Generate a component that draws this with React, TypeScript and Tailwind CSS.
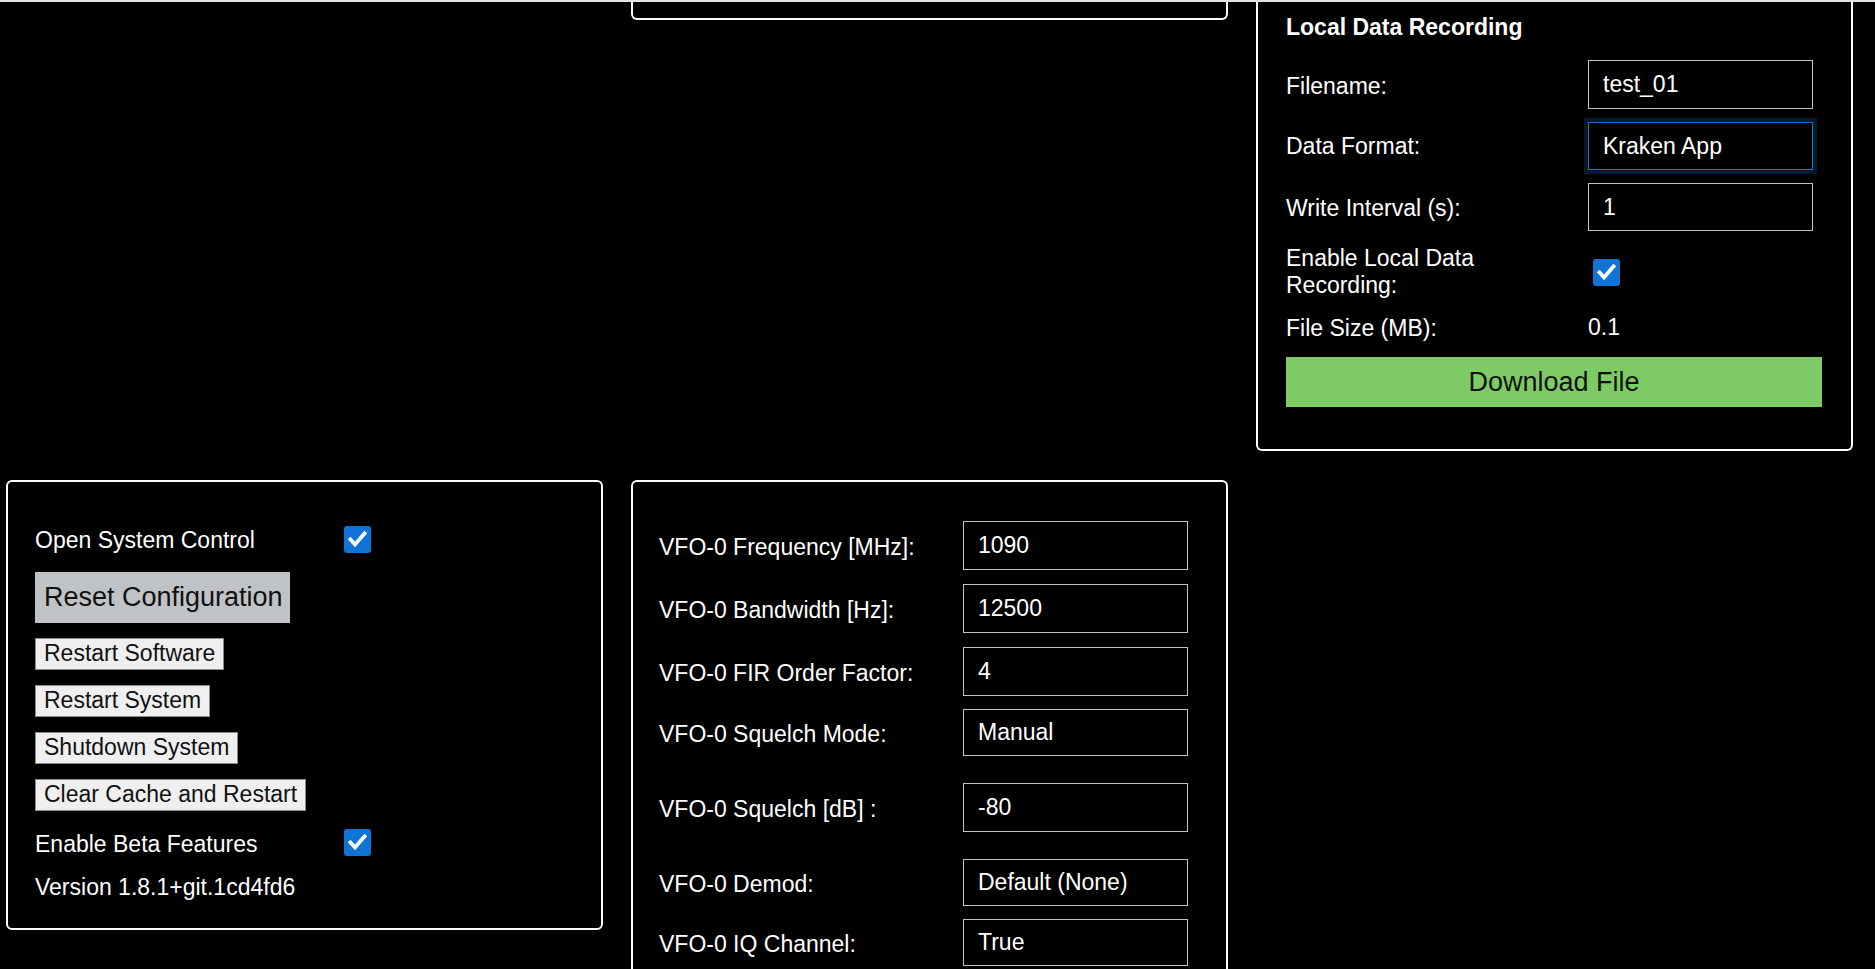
import React from "react";

const FONT = { fontFamily: '"Liberation Sans", Arial, Helvetica, sans-serif' };

function Check() {
  return (
    <div className="w-[27px] h-[27px] rounded-[3px] bg-[#0f74d6] shrink-0">
      <svg width="27" height="27" viewBox="0 0 27 27">
        <path d="M6.5 13.5 L11 18.5 L20.5 7.5" fill="none" stroke="white" strokeWidth="3.8" strokeLinecap="square" strokeLinejoin="miter" />
      </svg>
    </div>
  );
}

function Field({ value, focused = false, h = 48 }: { value: string; focused?: boolean; h?: number }) {
  return (
    <div
      className={
        focused
          ? "w-[225px] border-[1.5px] border-[#1c6fd3] shadow-[0_0_0_4px_#0a1828] bg-black text-white text-[23px] pl-[14px] flex items-center"
          : "w-[225px] border-[1.5px] border-[#c4c4c4] bg-black text-white text-[23px] pl-[14px] flex items-center"
      }
      style={{ height: h }}
    >
      {value}
    </div>
  );
}

function SmallButton({ label, mt }: { label: string; mt: string }) {
  return (
    <div className={mt}>
      <button className="h-[32px] px-[8px] border border-[#8a8a8a] bg-[#efefef] text-[#111] text-[23px] leading-none">
        {label}
      </button>
    </div>
  );
}

export default function App() {
  const vfoRows: { label: string; value: string; mt: string; h: number }[] = [
    { label: "VFO-0 Frequency [MHz]:", value: "1090", mt: "mt-[39px]", h: 49 },
    { label: "VFO-0 Bandwidth [Hz]:", value: "12500", mt: "mt-[14px]", h: 49 },
    { label: "VFO-0 FIR Order Factor:", value: "4", mt: "mt-[14px]", h: 49 },
    { label: "VFO-0 Squelch Mode:", value: "Manual", mt: "mt-[13px]", h: 47 },
    { label: "VFO-0 Squelch [dB] :", value: "-80", mt: "mt-[27px]", h: 49 },
    { label: "VFO-0 Demod:", value: "Default (None)", mt: "mt-[27px]", h: 47 },
    { label: "VFO-0 IQ Channel:", value: "True", mt: "mt-[13px]", h: 47 },
  ];

  return (
    <div className="h-screen bg-black text-white overflow-hidden" style={FONT}>
      <div className="h-[2px] w-full bg-[#e2e2e2]" />
      <div className="grid grid-cols-[597px_597px_597px] gap-x-[28px] gap-y-[29px] pl-[6px]">
        {/* Row 1 */}
        <div />
        <div className="h-[18px] border-2 border-t-0 border-white rounded-b-[6px] self-start" />
        <div className="h-[449px] border-2 border-t-0 border-white rounded-b-[6px] pl-[28px] pr-[28px] flex flex-col">
          <div className="mt-[12px] text-[23px] leading-[26px] font-bold">Local Data Recording</div>
          <div className="mt-[20px] flex items-center">
            <div className="w-[302px] text-[23px] leading-[27px] pt-[3px]">Filename:</div>
            <Field value="test_01" h={49} />
          </div>
          <div className="mt-[13px] flex items-center">
            <div className="w-[302px] text-[23px] leading-[27px]">Data Format:</div>
            <Field value="Kraken App" focused h={48} />
          </div>
          <div className="mt-[13px] flex items-center">
            <div className="w-[302px] text-[23px] leading-[27px] pt-[3px]">Write Interval (s):</div>
            <Field value="1" h={48} />
          </div>
          <div className="mt-[14px] flex items-center">
            <div className="w-[307px] text-[23px] leading-[27px]">
              Enable Local Data
              <br />
              Recording:
            </div>
            <Check />
          </div>
          <div className="mt-[15px] flex items-center h-[26px]">
            <div className="w-[302px] text-[23px] leading-[26px] pt-[2px]">File Size (MB):</div>
            <div className="text-[23px] leading-[26px]">0.1</div>
          </div>
          <button className="mt-[17px] h-[50px] w-[536px] bg-[#7ecb65] text-[#111] text-[27px] leading-none">
            Download File
          </button>
        </div>

        {/* Row 2 */}
        <div className="h-[450px] border-2 border-white rounded-[6px] pl-[27px] flex flex-col items-start">
          <div className="mt-[43px] flex items-center">
            <div className="w-[309px] text-[23px] leading-[26px] pt-[2px]">Open System Control</div>
            <Check />
          </div>
          <button className="mt-[19px] h-[51px] w-[255px] bg-[#bfc3c6] text-[#111] text-[27px] leading-none text-left pl-[9px]">
            Reset Configuration
          </button>
          <SmallButton label="Restart Software" mt="mt-[14.5px]" />
          <SmallButton label="Restart System" mt="mt-[15px]" />
          <SmallButton label="Shutdown System" mt="mt-[15px]" />
          <SmallButton label="Clear Cache and Restart" mt="mt-[15px]" />
          <div className="mt-[18px] flex items-center">
            <div className="w-[309px] text-[23px] leading-[26px] pt-[2px]">Enable Beta Features</div>
            <Check />
          </div>
          <div className="mt-[17px] text-[23px] leading-[26px]">Version 1.8.1+git.1cd4fd6</div>
        </div>

        <div className="h-[560px] border-2 border-white rounded-t-[6px] pl-[26px] flex flex-col">
          {vfoRows.map((r) => (
            <div key={r.label} className={r.mt + " flex items-center"}>
              <div className="w-[304px] text-[23px] leading-[27px] pt-[3px]">{r.label}</div>
              <Field value={r.value} h={r.h} />
            </div>
          ))}
        </div>
        <div />
      </div>
    </div>
  );
}
